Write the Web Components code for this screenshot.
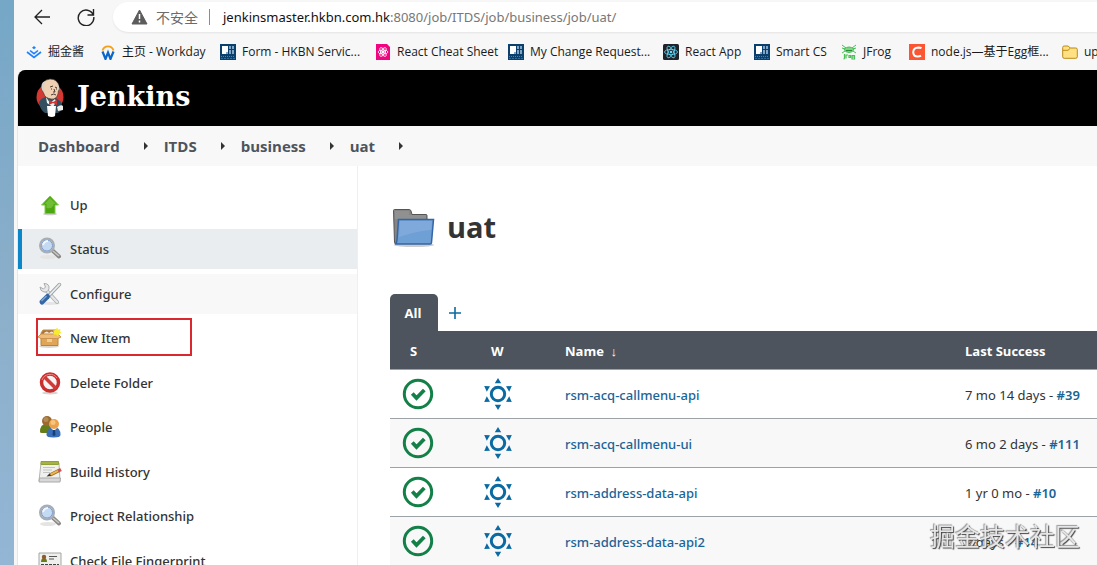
<!DOCTYPE html>
<html lang="en">
<head>
<meta charset="utf-8">
<title>uat [Jenkins]</title>
<style>
  html, body { margin: 0; height: 100%; overflow: hidden; }
  body { font: 14px/20px "Noto Sans", "Noto Sans CJK SC", sans-serif; color: #333; background: #fff; }
</style>
</head>
<body>
<browser-window>
  <browser-toolbar slot="toolbar"></browser-toolbar>
  <bookmark-bar slot="bookmarks"></bookmark-bar>
  <jenkins-header slot="page"></jenkins-header>
  <bread-crumbs slot="page"></bread-crumbs>
  <page-columns slot="page">
    <side-panel slot="side"></side-panel>
    <job-view>uat</job-view>
  </page-columns>
</browser-window>
<water-mark>掘金技术社区</water-mark>

<script>
const define = (name, html) => customElements.define(name, class extends HTMLElement {
  constructor() {
    super();
    const t = document.createElement('template');
    t.innerHTML = typeof html === 'function' ? html() : html;
    this.attachShadow({ mode: 'open' }).append(t.content.cloneNode(true));
  }
});

const lens = `<ellipse cx="10" cy="20" rx="8" ry="2" fill="#e4e4e4"/><path d="M14 13l7 6.500" stroke="#8b8986" stroke-width="4" stroke-linecap="round"/><path d="M15 14l6 5" stroke="#c9c7c3" stroke-width="1.500"/><circle cx="9" cy="8.500" r="7" fill="#c4d9f2" stroke="#a9adb3" stroke-width="2"/><circle cx="9" cy="8.500" r="5.500" fill="none" stroke="#7d9dcc"/><path d="M5 8q1-4 5-4" stroke="#fff" stroke-width="2" fill="none" opacity=".8"/>`;
const now = `<path fill="#0b3f6c" d="M0 0h16v16H0z"/><path fill="#fff" d="M2 2h6v6H6v2H2z"/><path fill="#7fa6c6" d="M9 2h2v3H9zM12 2h2v3h-2zM9 6h2v4H9zM12 6h2v4h-2zM6 8h2v2H6z"/><path d="M1 12.500h14" stroke="#4c80ab" stroke-dasharray="1 1"/><path d="M1 14.500h14" stroke="#316b99" stroke-dasharray="2 1"/>`;
const atom = (c, s) => `<g fill="none" stroke="${c}" stroke-width=".8"><ellipse cx="8" cy="8" rx="${s}" ry="${s * .4}"/><ellipse cx="8" cy="8" rx="${s}" ry="${s * .4}" transform="rotate(60 8 8)"/><ellipse cx="8" cy="8" rx="${s}" ry="${s * .4}" transform="rotate(120 8 8)"/></g><circle cx="8" cy="8" r="1.300" fill="${c}"/>`;
const art = {
  juejin: [16, `<g fill="none" stroke="#1e80ff" stroke-width="1.600"><path d="M1 8l7 5.500L15 8M4 6.500L8 9.700l4-3.200"/></g><path d="M8 2l2 1.700L8 5.300 6 3.700z" fill="#1e80ff"/>`],
  workday: [16, `<path d="M2.500 6.500a5.700 5.700 0 0 1 11 0" fill="none" stroke="#f6a01a" stroke-width="1.800"/><path d="M2.500 7.500l3 7.500L8 8.500l2.500 6.500 3-7.500" fill="none" stroke="#0b67c9" stroke-width="2.200"/>`],
  now: [16, now],
  cheat: [16, `<path fill="#f0047f" d="M1 0h11l3 3v13H1z"/>${atom('#fff', 5)}`],
  react: [16, `<rect width="16" height="16" rx="1.500" fill="#20232a"/>${atom('#61dafb', 6.5)}`],
  frog: [16, `<g fill="none" stroke="#49bf55"><path d="M1 1l4 3M15 1l-4 3M1 4l3 1M15 4l-3 1M1 9l3-2M15 9l-3-2" /><path d="M3 5q5-4 10 0-1 3.500-5 3.500T3 5z" fill="#7fd487"/><path d="M5 6.500h6" stroke="#268d34"/><path stroke-width="1.200" d="M3.500 10v4q0 1-1 1M5 14.500V11h2M8 11.500h1.500v2H8zM11 11.500h2.500v3.500H11zM11 13h2"/></g>`],
  csdn: [16, `<path fill="#fc5531" d="M0 0h16v16H0z"/><path d="M12.500 4.300Q11.500 3.500 9.300 3.500 4.500 3.700 4.200 8q0 4.500 4.500 4.500 2 0 3.300-.8" fill="none" stroke="#fff" stroke-width="2"/>`],
  dir: [16, `<path d="M.7 3.500q0-1.500 1.500-1.500h4l2 2h5.600q1.500 0 1.500 1.500v7.300q0 1.500-1.500 1.500H2.200q-1.500 0-1.500-1.500z" fill="#ffe083" stroke="#b98b15"/><path d="M1 6.300h5l2.200-2" fill="none" stroke="#b98b15"/>`],
  up: [24, `<ellipse cx="12" cy="21" rx="7" ry="1.300" fill="#ccc"/><path d="M12 3l8.500 9H17v8.500H7V12H3.500z" fill="#4ba610" stroke="#82c84c"/><path d="M12 5l-5.500 6H8.500v4q5 1 7-2.500V11H18z" fill="#70be35"/>`],
  lens: [24, lens],
  tools: [24, `<ellipse cx="12" cy="21.500" rx="10" ry="1.500" fill="#e4e4e4"/><path d="M8 8l11 12" stroke="#a9adaf" stroke-width="4" stroke-linecap="round"/><path d="M8 8l11 12" stroke="#e4e6e7" stroke-width="2.400" stroke-linecap="round"/><path d="M6 1.500q5.500 0 5 5-1 4-5 3.500-4-1-4-5l3.500 2 2-2z" fill="#e6e8e9" stroke="#a9acae"/><path d="M21.500 2.500L11 13.500" stroke="#9da2a5" stroke-width="3.500" stroke-linecap="round"/><path d="M21.500 2.500L11 13.500" stroke="#eceeef" stroke-width="1.800" stroke-linecap="round"/><path d="M9.500 14.500L4 20" stroke="#3465a4" stroke-width="5" stroke-linecap="round"/><path d="M8.500 14L3.500 19" stroke="#7ea6d8" stroke-width="1.500"/>`],
  box: [24, `<ellipse cx="11" cy="20.500" rx="10" ry="1.500" fill="#ddd8cf"/><path d="M3 9h17v10.500H3z" fill="#dfa657" stroke="#bd8238"/><path d="M3 7l2-3h13l2 3v2H3z" fill="#a8743c" stroke="#c68d4c"/><path d="M6 7q3-3 5 0 3-3 5 0v1.500H6z" fill="#f5e7d4"/><path d="M3 8L0 11l3 1.500h17l3-1.500-3-3z" fill="#edbd79" stroke="#cc9350"/><path d="M9 13h5v3H9z" fill="#f1cd96"/><path d="M19 1.500l1.200 2 2.300-.5-.5 2.500 1.500 1.500-2.500 1-1 2-2-1.500-2.500.5.500-2.500-1-2 2.500-.5z" fill="#f8ec30"/>`],
  no: [24, `<ellipse cx="12" cy="22" rx="8" ry="1.500" fill="#d4d4d4"/><circle cx="12" cy="11.500" r="8.500" fill="#f7f3f2" stroke="#c92f2f" stroke-width="3.500"/><path d="M6 5.500l12 12" stroke="#cf3a3a" stroke-width="3.500"/><path d="M4 9a8.500 8.500 0 0 1 15-2" fill="none" stroke="#ee8c87"/>`],
  people: [24, `<path d="M2 17q0-8 6-8t7 9H4q-2 0-2-1z" fill="#647d18"/><circle cx="9" cy="6" r="5" fill="#9a6a32"/><circle cx="8" cy="4.500" r="2.500" fill="#b58a52"/><path d="M8.500 20q0-8 7-8t7 8q0 2.500-7 2.500t-7-2.500z" fill="#3b6eb5"/><path d="M13 13l3 3 3-3z" fill="#fff"/><path d="M15 15h2l.5 5-1.500 1-1.500-1z" fill="#173f7b"/><circle cx="16" cy="9" r="5" fill="#eca24b"/><circle cx="15" cy="7.500" r="2.500" fill="#f8c57d"/>`],
  note: [24, `<path d="M3 3h18l1 18H1z" fill="#f0f0ee" stroke="#b5b4b1"/><path d="M3 1.500h17.500v3H3z" fill="#a6b342" stroke="#93a03a"/><path d="M5 7.500h12M5 10h9M5 12.500h7" stroke="#c4c4c4"/><path d="M1.500 18h21l-.5 4H1z" fill="#d8d8d8" stroke="#aaa"/><path d="M12 15l9-4.500" stroke="#9a6c26" stroke-width="3.500"/><path d="M12.500 14.700l7.500-3.800" stroke="#eeb64d" stroke-width="2"/><path d="M20.500 10.800l2.500-1.300" stroke="#cf5450" stroke-width="3.500"/><path d="M8.500 16.500l3-3 1.500 2.500z" fill="#333"/>`],
  card: [24, `<path d="M1 4h22v16H1z" fill="#efefed" stroke="#a5a5a3"/><path d="M3 13q0-4 3-4t3 4z" fill="#647d18"/><circle cx="6" cy="8" r="2.200" fill="#8c5c2b"/><path d="M11 7.500h8M11 10h5" stroke="#555"/><path d="M3 15.500h18M3 17.500h18" stroke="#444" stroke-dasharray="3 1"/>`],
  folder: [48, `<ellipse cx="24" cy="41" rx="20" ry="2" fill="#ccc"/><path d="M3.500 6.500q0-1 1-1h15q1 0 1.500 1.500l1 3.500h14q1 0 1 1v28H5.500q-1 0-1-1z" fill="#858585" stroke="#555"/><path d="M5 8h14M5 10h14M5 12h31M5 14h31" stroke="#9c9c9c"/><path d="M8.500 15.500h35l-2 23q0 1.500-1.500 1.500H5q2-1 2-4z" fill="#6e9fd5" stroke="#3465a4" stroke-width="1.500"/><path d="M10 17h32l-1 9q-14 1-32 7z" fill="#8bb1de" opacity=".6"/>`],
  ok: [32, `<circle cx="16" cy="16" r="13.700" fill="none" stroke="#138048" stroke-width="3"/><path d="M10.300 15.500l4.200 4.500 7.800-8" fill="none" stroke="#138048" stroke-width="3.800"/>`],
  sun: [32, `<g fill="#0b6aa2"><circle cx="16" cy="16" r="6.700" fill="none" stroke="#0b6aa2" stroke-width="3"/><path d="M16 0l3.200 5.200h-6.400zM16 32l3.200-5.200h-6.400zM29.800 8l-5.800.2 3.200 5.600zM2.200 8l5.800.2-3.200 5.600zM29.800 24l-5.800-.2 3.200-5.600zM2.200 24l5.800-.2-3.200-5.600z"/></g>`],
};
customElements.define('ui-icon', class extends HTMLElement {
  connectedCallback() {
    if (this.shadowRoot) return;
    const [box, body] = art[this.getAttribute('name')];
    this.attachShadow({ mode: 'open' }).innerHTML =
      `<style>:host{display:block;flex:none;width:${box}px;height:${box}px}svg{display:block;width:100%;height:100%}</style>
       <svg viewBox="0 0 ${box} ${box}" fill="none" aria-hidden="true">${body}</svg>`;
  }
});

define('browser-window', `
<style>
  :host { display: flex; height: 100%; background: #f7f7f7; }
  .desk { flex: none; width: 14px; background: linear-gradient(#75a7c6, #8cafca 55%, #93b6d5); }
  .win { flex: 1; min-width: 0; display: flex; flex-direction: column; }
  .page { flex: 1; min-height: 0; margin-left: 3px; border-left: 1px solid #e6e6e6; border-top-left-radius: 8px; background: #fff; overflow: hidden; display: flex; flex-direction: column; }
</style>
<div class="desk"></div>
<div class="win"><slot name="toolbar"></slot><slot name="bookmarks"></slot><div class="page"><slot name="page"></slot></div></div>`);

define('browser-toolbar', `
<style>
  :host { display: flex; align-items: center; gap: 20px; height: 34px; padding-left: 16px; flex: none; }
  button { border: 0; padding: 0; background: none; width: 24px; height: 24px; display: grid; place-items: center; }
  .address { flex: 1; display: flex; align-items: center; height: 30px; padding-left: 18px; margin-left: -5px; border-radius: 15px 0 0 15px; background: #fff; font-size: 13px; box-shadow: 0 1px 2px #e4e4e4; }
  .insecure { color: #6b6b6b; font-family: "Noto Sans CJK SC", sans-serif; font-size: 14px; margin-left: 8px; padding-right: 11px; margin-right: 13px; border-right: 1px solid #8c8c8c; line-height: 16px; }
  .url { color: #777; white-space: nowrap; }
  b { font-weight: 400; color: #111; }
</style>
<button aria-label="Back"><svg width="18" height="16" fill="none" stroke="#222" stroke-width="1.300"><path d="M17 8H2M9 1L2 8l7 7"/></svg></button>
<button aria-label="Refresh"><svg width="18" height="18" fill="none" stroke="#222" stroke-width="1.400"><path d="M16.300 7A7.800 7.800 0 1 0 16.800 9M16.500 1v6h-6"/></svg></button>
<div class="address">
  <svg width="17" height="16"><path d="M8.500 1L16 15H1z" fill="#5c5c5c" stroke="#5c5c5c" stroke-linejoin="round"/><path d="M8.500 5v5M8.500 11.500v2" stroke="#fff" stroke-width="1.500"/></svg>
  <span class="insecure">不安全</span><span class="url"><b>jenkinsmaster.hkbn.com.hk</b>:8080/job/ITDS/job/business/job/uat/</span>
</div>`);

define('bookmark-bar', () => `
<style>
  :host { display: block; flex: none; height: 36px; overflow: hidden; }
  nav { display: grid; grid-template-columns: 74px 120px 155px 133px 155px 91px 87px 68px 153px 60px; height: 36px; align-items: center; padding-left: 12px; }
  a { display: flex; align-items: center; gap: 6px; color: #1a1a1a; text-decoration: none; font: 12px/20px "Open Sans", "Noto Sans CJK SC", sans-serif; white-space: nowrap; }
</style>
<nav>${[['juejin', '掘金酱'], ['workday', '主页 - Workday'], ['now', 'Form - HKBN Servic...'], ['cheat', 'React Cheat Sheet'], ['now', 'My Change Request...'], ['react', 'React App'], ['now', 'Smart CS'], ['frog', 'JFrog'], ['csdn', 'node.js—基于Egg框...'], ['dir', 'up']]
  .map(([i, t]) => `<a href="#"><ui-icon name="${i}"></ui-icon><span>${t}</span></a>`).join('')}</nav>`);

define('jenkins-header', `
<style>
  :host { display: flex; align-items: center; flex: none; height: 56px; background: #000; }
  a { display: flex; align-items: center; gap: 12px; padding: 0 0 2px 18px; color: #fff; text-decoration: none; font: bold 27px/40px "DejaVu Serif", serif; }
  svg { margin-top: 2px; }
</style>
<a href="#"><svg width="29" height="40" viewBox="0 0 29 40">
  <circle cx="14" cy="19" r="13.500" fill="#d33833"/>
  <path d="M3 24q3-5 8-5l9 1 5 4 2 7-5 4H9q-5-3-6-11z" fill="#335061"/>
  <path d="M10 19l4 6 5-4 1 3-3 5-6-4z" fill="#f5f3ee"/>
  <path d="M6 12Q5 2 14 1q8 0 9 8l-1 7q-2 6-7 5-6-1-7-5z" fill="#efd0b2" stroke="#4b3a32" stroke-width=".7"/>
  <path d="M6 12Q4 5 9 3q-1 4-1 8l1 3zM21 5q3 3 2 8l-1-2z" fill="#d8d0c8"/>
  <path d="M14 9l3-1M19 9l2 1M15 11h1M20 11h1M15 17q3-2 5 0M18 11l1 3h-2" stroke="#3b2b24" stroke-width=".9" fill="none"/>
  <path d="M13 22l4 2 4-2v5l-4-2-4 2z" fill="#d5332f"/>
  <path d="M11 28h9l-1 10q-3 2-7 0z" fill="#fff"/><path d="M21 29q4-3 6-1v4l-5 1z" fill="#f0eee9"/>
</svg><span>Jenkins</span></a>`);

define('bread-crumbs', `
<style>
  :host { display: block; flex: none; background: #f8f8f8; }
  ol { display: flex; height: 40px; align-items: center; margin: 0; padding: 0 0 0 20px; list-style: none; }
  li { display: flex; align-items: center; }
  li::after { content: ""; border: 4px solid transparent; border-left-color: #333; border-right: 0; margin: 0 16px 0 24px; }
  a { color: #4d545d; text-decoration: none; font: bold 15px/20px "Open Sans", sans-serif; }
</style>
<ol><li><a href="#">Dashboard</a></li><li><a href="#">ITDS</a></li><li><a href="#">business</a></li><li><a href="#">uat</a></li></ol>`);

define('page-columns', `
<style>
  :host { display: flex; flex: 1; min-height: 0; }
  .side { flex: none; width: 339px; border-right: 1px solid #efefef; }
  main { flex: 1; min-width: 0; padding-left: 32px; }
</style>
<div class="side"><slot name="side"></slot></div><main><slot></slot></main>`);

define('side-panel', () => `
<style>
  :host { display: block; padding-top: 14px; }
  ul { margin: 0; padding: 0; list-style: none; }
  li { margin-top: 4px; }
  li:nth-child(odd) { margin-top: 5px; }
  a { display: flex; align-items: center; gap: 8px; height: 40px; padding-left: 20px; color: #333; text-decoration: none; font: 500 13px/20px "Noto Sans", sans-serif; }
  .active { background: #e9edf0; box-shadow: inset 4px 0 #0b87c9; }
  .hover { background: #f8f8f8; }
  .marked { position: relative; }
  .marked::before { content: ""; position: absolute; inset: 0 auto 2px 18px; width: 152px; border: 2px solid #d9292f; }
</style>
<ul>${[['up', 'Up'], ['lens', 'Status', 'active'], ['tools', 'Configure', 'hover'], ['box', 'New Item', 'marked'], ['no', 'Delete Folder'], ['people', 'People'], ['note', 'Build History'], ['lens', 'Project Relationship'], ['card', 'Check File Fingerprint']]
  .map(([i, t, c = '']) => `<li><a href="#" class="${c}"><ui-icon name="${i}"></ui-icon><span>${t}</span></a></li>`).join('')}</ul>`);

define('job-view', () => `
<style>
  :host { display: block; }
  header { display: flex; align-items: center; gap: 9px; height: 48px; padding-top: 38px; }
  h1 { margin: 0; padding-bottom: 2px; font: bold 29px/40px "Open Sans", sans-serif; color: #333; }
  .tabs { display: flex; align-items: center; margin-top: 42px; }
  .tabs a { font: bold 13px/38px "Open Sans", sans-serif; height: 37px; text-decoration: none; color: #fff; background: #4d545d; width: 46px; padding-right: 2px; text-align: center; border-radius: 5px 5px 0 0; }
  .tabs .add { background: none; padding: 0; width: 34px; display: grid; place-items: center; }
  table { width: 100%; border-collapse: collapse; table-layout: fixed; }
  col.s { width: 85px; } col.w { width: 80px; } col.n { width: 400px; }
  th { height: 36px; padding: 2px 10px 0; background: #4d545d; color: #fff; text-align: left; font: bold 13px/20px "Open Sans", sans-serif; }
  th:first-child { padding-left: 20px; } th:nth-child(2) { padding-left: 16px; }
  td { height: 46px; padding: 2px 10px 0; border-top: 1px solid #9da2a6; font: 13px/20px "Noto Sans", sans-serif; white-space: nowrap; }
  td:first-child { padding: 0 0 0 12px; height: 48px; } td:nth-child(2) { padding: 0 0 0 7px; height: 48px; }
  tr:nth-child(even) td { background: #f8f8f8; }
  td a { color: #1a6496; text-decoration: none; font-weight: 500; }
  td:last-child a { font-weight: 600; }
</style>
<header><ui-icon name="folder"></ui-icon><h1><slot></slot></h1></header>
<div class="tabs"><a href="#">All</a><a href="#" class="add" aria-label="New view"><svg width="12" height="12" stroke="#0b6aa2" stroke-width="1.600"><path d="M6 0v12M0 6h12"/></svg></a></div>
<table><colgroup><col class="s"><col class="w"><col class="n"><col></colgroup>
<thead><tr><th>S</th><th>W</th><th>Name &nbsp;↓</th><th>Last Success</th></tr></thead>
<tbody>${[['rsm-acq-callmenu-api', '7 mo 14 days', '#39'], ['rsm-acq-callmenu-ui', '6 mo 2 days', '#111'], ['rsm-address-data-api', '1 yr 0 mo', '#10'], ['rsm-address-data-api2', '9 days', '#14']]
  .map(([n, t, b]) => `<tr><td><ui-icon name="ok"></ui-icon></td><td><ui-icon name="sun"></ui-icon></td><td><a href="#">${n}</a></td><td>${t} - <a href="#">${b}</a></td></tr>`).join('')}</tbody></table>`);

define('water-mark', `
<style>
  :host { position: fixed; right: 17px; bottom: 12px; font: 25px/36px "Noto Sans CJK SC", sans-serif; color: #e6e6e6; text-shadow: 1px 1px 1px #444, -1px -1px 1px #999; pointer-events: none; }
</style><slot></slot>`);
</script>
</body>
</html>
